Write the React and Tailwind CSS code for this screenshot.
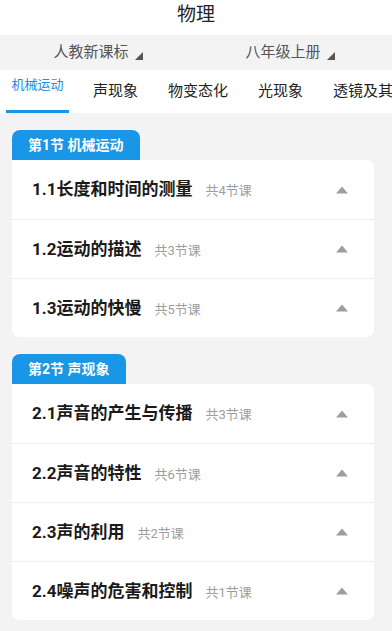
import React from "react";

const font = { fontFamily: 'Roboto, "Noto Sans CJK SC", "Noto Sans", sans-serif' };

const sections = [
  {
    title: "第1节 机械运动",
    items: [
      ["1.1长度和时间的测量", "共4节课"],
      ["1.2运动的描述", "共3节课"],
      ["1.3运动的快慢", "共5节课"],
    ],
  },
  {
    title: "第2节 声现象",
    items: [
      ["2.1声音的产生与传播", "共3节课"],
      ["2.2声音的特性", "共6节课"],
      ["2.3声的利用", "共2节课"],
      ["2.4噪声的危害和控制", "共1节课"],
    ],
  },
];

function Corner() {
  return (
    <svg width="8" height="8" viewBox="0 0 8 8" className="shrink-0">
      <polygon points="8,0 8,8 0,8" fill="#555" />
    </svg>
  );
}

function Up() {
  return (
    <svg width="12" height="8" viewBox="0 0 12 8">
      <polygon points="6,0.5 12,7.5 0,7.5" fill="#9e9e9e" />
    </svg>
  );
}

export default function App() {
  return (
    <div className="min-h-screen bg-[#f3f3f3] overflow-hidden" style={font}>
      <div className="h-[35px] bg-white flex items-center justify-center text-[19px] text-[#222] leading-none pb-[6px]">
        物理
      </div>
      <div className="h-[35px] flex text-[15px] text-[#555] leading-none">
        <div className="flex-1 flex items-center justify-center pl-[2px]">
          <div className="flex items-end gap-[6px]">
            <span>人教新课标</span>
            <Corner />
          </div>
        </div>
        <div className="flex-1 flex items-center justify-center pr-[6px]">
          <div className="flex items-end gap-[6px]">
            <span>八年级上册</span>
            <Corner />
          </div>
        </div>
      </div>
      <div className="h-[43px] bg-white flex whitespace-nowrap pl-[6px] leading-none overflow-hidden">
        <div className="relative shrink-0 w-[63px] flex justify-center pt-[8px] text-[13px] text-[#1a8fe3]">
          <span>机械运动</span>
          <div className="absolute left-0 right-0 bottom-0 h-[3px] bg-[#1a95e6]" />
        </div>
        <div className="shrink-0 ml-[24px] flex items-center text-[15px] text-[#222]">声现象</div>
        <div className="shrink-0 ml-[30px] flex items-center text-[15px] text-[#222]">物变态化</div>
        <div className="shrink-0 ml-[30px] flex items-center text-[15px] text-[#222]">光现象</div>
        <div className="shrink-0 ml-[30px] flex items-center text-[15px] text-[#222]">透镜及其应用</div>
      </div>
      <div className="pl-[12px] pr-[18px] pb-[10px]">
        {sections.map((s) => (
          <div key={s.title} className="mt-[17px]">
            <div className="inline-flex h-[30px] items-center px-[16px] bg-[#1a96e6] rounded-t-[8px] text-white text-[14px] font-bold leading-none">
              {s.title}
            </div>
            <div className="bg-white rounded-b-[7px] rounded-tr-[7px]">
              {s.items.map(([t, c], i) => (
                <div
                  key={t}
                  className={`h-[59px] flex items-center pl-[20px] pr-[26px] ${i > 0 ? "border-t border-[#eeeeee]" : ""}`}
                >
                  <span className="text-[17px] font-bold text-[#1a1a1a] leading-none">{t}</span>
                  <span className="ml-[13px] text-[13px] text-[#9e9e9e] leading-none mt-[2px]">{c}</span>
                  <div className="ml-auto flex items-center">
                    <Up />
                  </div>
                </div>
              ))}
            </div>
          </div>
        ))}
      </div>
    </div>
  );
}
